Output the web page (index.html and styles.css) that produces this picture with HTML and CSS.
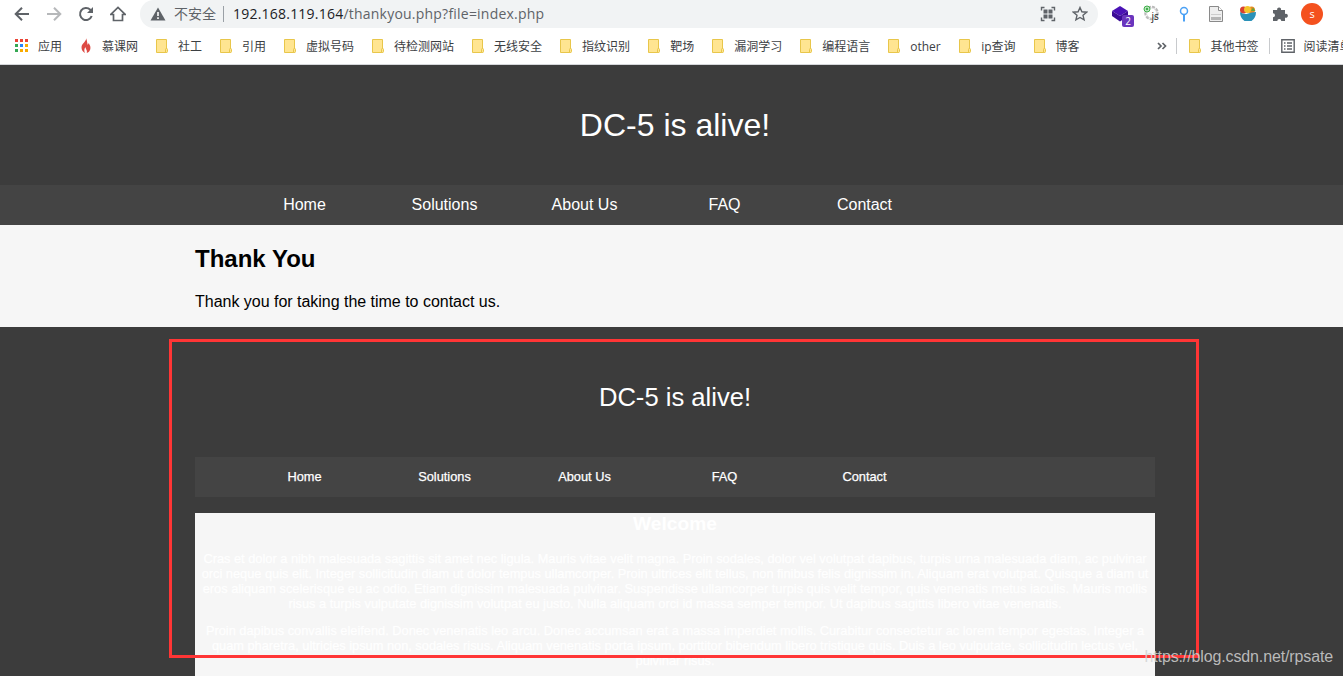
FILE: index.html
```
<!DOCTYPE html>
<html lang="zh-CN">
<head>
    <meta charset="UTF-8">
    <meta name="viewport" content="width=device-width, initial-scale=1.0">
    <title>Thank You</title>
    <link rel="stylesheet" href="styles.css">
</head>
<body>
    <!-- reusable shapes -->
    <svg class="defs" width="0" height="0">
        <symbol id="folder" viewBox="0 0 16 16">
            <path d="M2.500 1.500h10v13h-10z" fill="#ffe591" stroke="#e8c64a"/>
            <path d="M11.500 14.500v-3q0-1 1-1t1 1v2q0 1-1 1z" fill="#ffe591" stroke="#e8c64a"/>
        </symbol>
    </svg>

    <div class="browser">
        <div class="toolbar">
            <div class="nav-buttons">
                <svg width="16" height="16" viewBox="0 0 16 16"><path d="M15 8H2M8 1.700L1.700 8 8 14.300" class="line"/></svg>
                <svg width="16" height="16" viewBox="0 0 16 16" class="disabled"><path d="M1 8h13M8 1.700L14.300 8 8 14.300" class="line"/></svg>
                <svg width="16" height="16" viewBox="0 0 16 16"><path d="M13.700 10A6 6 0 1 1 12.300 3.800L14 5.500" class="line"/><path d="M15 1v6H9z" fill="#5f6368"/></svg>
                <svg width="16" height="16" viewBox="0 0 16 16"><path d="M.8 8.500h2.700v6h9v-6h2.700L8 1.500z" class="line thin"/></svg>
            </div>
            <div class="address">
                <svg width="16" height="14" viewBox="0 0 16 14"><path d="M8 .5L15.500 13.500H.5z" fill="#5f6368"/><path d="M8 5v4M8 10.200v1.800" stroke="#fff" stroke-width="1.600"/></svg>
                <span class="insecure">不安全</span>
                <span class="url"><b>192.168.119.164</b>/thankyou.php?file=index.php</span>
                <svg class="qr" width="16" height="16" viewBox="0 0 16 16"><path d="M1.500 4.500v-3h3M11.500 1.500h3v3M14.500 11.500v3h-3M4.500 14.500h-3v-3" fill="none" stroke="#5f6368" stroke-width="1.400"/><path d="M3.500 3.500h4v4h-4zM8.500 3.500h4v4h-4zM3.500 8.500h4v4h-4zM8.500 8.500h4v4h-4z" fill="#5f6368"/></svg>
                <svg width="16" height="16" viewBox="0 0 16 16"><path d="M8 1.500l1.900 4.300 4.700.4-3.600 3.100 1.100 4.600L8 11.500l-4.100 2.400L5 9.300 1.400 6.200l4.700-.4z" fill="none" stroke="#5f6368" stroke-width="1.400"/></svg>
            </div>
            <div class="extensions">
                <div class="ext">
                    <svg width="18" height="16" viewBox="0 0 18 16"><path d="M9 0l8 5-8 5-8-5z" fill="#4a12b5"/><path d="M1 5l8 5 8-5v5l-8 5.500L1 10z" fill="#3b0c96"/></svg>
                    <span class="count">2</span>
                </div>
                <div class="ext"><svg width="18" height="18" viewBox="0 0 18 18"><circle cx="8.500" cy="8" r="6" fill="none" stroke="#bbb" stroke-width="2.500" stroke-dasharray="3 1"/><circle cx="8.500" cy="8" r="5" fill="#fff" stroke="#ddd"/><circle cx="4" cy="4" r="3" fill="#bfe6c2" stroke="#3fae49"/><circle cx="4" cy="4" r="1.200" fill="#3fae49"/><text x="8.500" y="15" class="js">js</text></svg></div>
                <div class="ext"><svg width="16" height="16" viewBox="0 0 16 16"><circle cx="8" cy="5" r="3.500" fill="none" stroke="#4ba1f5" stroke-width="1.500"/><path d="M8 8.500V15.500" stroke="#4ba1f5" stroke-width="2"/></svg></div>
                <div class="ext"><svg width="16" height="18" viewBox="0 0 16 18"><path d="M1.500 1.500h9l4 4v11h-13z" fill="#eee" stroke="#8a8a8a"/><path d="M10.500 1.500v4h4" fill="#fff" stroke="#8a8a8a"/><path d="M3 12h10v3H3z" fill="#b5b5b5"/><path d="M3 9.500h10" stroke="#ccc"/></svg></div>
                <div class="ext"><svg width="18" height="18" viewBox="0 0 18 18"><circle cx="4.500" cy="5" r="3.500" fill="#d84132"/><circle cx="12.500" cy="5" r="3.500" fill="#e98a24"/><circle cx="8.500" cy="4.500" r="3.500" fill="#f5c52b"/><path d="M12 6l2-3.500L16.500 6z" fill="#64a63b"/><path d="M1 7q4 3 8 1.500T17 7q0 6-4.500 9h-7Q1 13 1 7z" fill="#2a91b8"/></svg></div>
                <div class="ext"><svg width="16" height="16" viewBox="0 0 16 16"><path d="M1 4h4.200a2 2 0 1 1 3.800 0h4v4a2 2 0 1 1 0 3.600V15H9.300a2 2 0 0 0-4 0H1v-3.700a2 2 0 0 0 0-4z" fill="#5f6368"/></svg></div>
                <div class="ext"><span class="avatar">s</span></div>
            </div>
        </div>

        <div class="bookmarks">
            <a><svg width="16" height="16" viewBox="0 0 16 16"><path d="M1 1h3v3H1zM6 1h3v3H6zM11 1h3v3h-3z" fill="#ea4335"/><path d="M1 6h3v3H1zM1 11h3v3H1z" fill="#34a853"/><path d="M6 6h3v3H6z" fill="#2684fc"/><path d="M11 6h3v3h-3zM6 11h3v3H6zM11 11h3v3h-3z" fill="#f9ab00"/></svg>应用</a>
            <a><svg width="16" height="16" viewBox="0 0 16 16"><path d="M8 0c1 3-4 5-4.500 9-.2 3 1.500 5 3.500 6-1-2-1-4 .5-6 0 2 2 3 1.300 6 3-1 4-4 3.500-6.500C12 7 11 6.500 11 5c-.5.500-1 1-1 2C9 6 9.500 3 8 0z" fill="#dd4a43"/></svg>慕课网</a>
            <a><svg width="16" height="16"><use href="#folder"/></svg>社工</a>
            <a><svg width="16" height="16"><use href="#folder"/></svg>引用</a>
            <a><svg width="16" height="16"><use href="#folder"/></svg>虚拟号码</a>
            <a><svg width="16" height="16"><use href="#folder"/></svg>待检测网站</a>
            <a><svg width="16" height="16"><use href="#folder"/></svg>无线安全</a>
            <a><svg width="16" height="16"><use href="#folder"/></svg>指纹识别</a>
            <a><svg width="16" height="16"><use href="#folder"/></svg>靶场</a>
            <a><svg width="16" height="16"><use href="#folder"/></svg>漏洞学习</a>
            <a><svg width="16" height="16"><use href="#folder"/></svg>编程语言</a>
            <a><svg width="16" height="16"><use href="#folder"/></svg><span class="latin">other</span></a>
            <a><svg width="16" height="16"><use href="#folder"/></svg>ip查询</a>
            <a><svg width="16" height="16"><use href="#folder"/></svg>博客</a>
            <div class="right">
                <svg width="10" height="8" viewBox="0 0 10 8"><path d="M1 1l3 3-3 3M5.500 1l3 3-3 3" class="chevron"/></svg>
                <a class="others"><svg width="16" height="16"><use href="#folder"/></svg>其他书签</a>
                <a class="reading"><svg width="16" height="16" viewBox="0 0 16 16"><path d="M1.800 1.800h12.400v12.400H1.800z" fill="none" stroke="#5f6368" stroke-width="1.400"/><path d="M4 5h1.500M7 5h5M4 8h1.500M7 8h5M4 11h1.500M7 11h5" stroke="#5f6368" stroke-width="1.400"/></svg>阅读清单</a>
            </div>
        </div>
    </div>

    <div class="page">
        <header class="header"><h1>DC-5 is alive!</h1></header>
        <nav class="menu">
            <ul>
                <li>Home</li>
                <li>Solutions</li>
                <li>About Us</li>
                <li>FAQ</li>
                <li>Contact</li>
            </ul>
        </nav>
        <main class="content">
            <h2>Thank You</h2>
            <p>Thank you for taking the time to contact us.</p>
        </main>
        <footer class="footer">
            <header class="header"><h1>DC-5 is alive!</h1></header>
            <nav class="menu">
                <ul>
                    <li>Home</li>
                    <li>Solutions</li>
                    <li>About Us</li>
                    <li>FAQ</li>
                    <li>Contact</li>
                </ul>
            </nav>
            <div class="welcome">
                <h2>Welcome</h2>
                <p>
                    Cras et dolor a nibh malesuada sagittis sit amet nec ligula. Mauris vitae velit magna. Proin sodales, dolor vel volutpat dapibus, turpis urna malesuada diam, ac pulvinar<br>
                    orci neque quis elit. Integer sollicitudin diam ut dolor tempus ullamcorper. Proin ultrices elit tellus, non finibus felis dignissim in. Aliquam erat volutpat. Quisque a diam ut<br>
                    eros aliquam scelerisque eu ac odio. Etiam dignissim malesuada pulvinar. Suspendisse ullamcorper turpis quis velit tempor, quis venenatis metus iaculis. Mauris mollis<br>
                    risus a turpis vulputate dignissim volutpat eu justo. Nulla aliquam orci id massa semper tempor. Ut dapibus sagittis libero vitae venenatis.
                </p>
                <p>
                    Proin dapibus convallis eleifend. Donec venenatis leo arcu. Donec accumsan erat a massa imperdiet mollis. Curabitur consectetur ac lorem tempor egestas. Integer a<br>
                    quam pharetra, ultricies ipsum non, sodales risus. Aliquam venenatis porta ipsum, porttitor bibendum libero tristique quis. Duis a leo vulputate, sollicitudin lectus vel,<br>
                    pulvinar risus.
                </p>
            </div>
        </footer>
    </div>

    <div class="marker"></div>
    <div class="watermark">https://blog.csdn.net/rpsate</div>
</body>
</html>
```
FILE: styles.css
```
* {
    box-sizing: border-box;
}
body {
    margin: 0;
    height: 676px;
    overflow: hidden;
    position: relative;
    background-color: #3c3c3c;
    font-family: "Liberation Sans", Arial, sans-serif;
}
svg {
    display: block;
    flex: none;
}
.defs {
    position: absolute;
}

/* browser bars */
.browser {
    height: 65px;
    background-color: #fff;
    border-bottom: 1px solid #d5d7da;
    font-family: "Open Sans", "Noto Sans CJK SC", sans-serif;
}
.toolbar {
    display: flex;
    height: 28px;
}
.nav-buttons {
    display: flex;
    align-items: center;
    gap: 16px;
    width: 140px;
    padding-left: 14px;
}
.line {
    fill: none;
    stroke: #5f6368;
    stroke-width: 2;
}
.thin {
    stroke-width: 1.7;
}
.disabled {
    opacity: 0.45;
}
.address {
    display: flex;
    align-items: center;
    width: 958px;
    padding: 0 10px;
    background-color: #f1f3f4;
    border-radius: 0 14px 14px 0;
    border-top-left-radius: 14px;
    border-bottom-left-radius: 14px;
    color: #5f6368;
    font-size: 14px;
}
.insecure {
    margin-left: 8px;
    padding-right: 7px;
    border-right: 1px solid #9aa0a6;
    line-height: 16px;
}
.url {
    margin-left: 9px;
    letter-spacing: 0.22px;
    line-height: 18px;
    padding-bottom: 1px;
}
.url b {
    color: #202124;
    font-weight: normal;
}
.qr {
    margin-left: auto;
    margin-right: 16px;
}
.extensions {
    display: flex;
    align-items: center;
    padding-left: 6px;
}
.ext {
    position: relative;
    display: flex;
    justify-content: center;
    width: 32px;
}
.count {
    position: absolute;
    left: 18px;
    top: 9px;
    width: 12px;
    height: 12px;
    border-radius: 2px;
    background-color: #6a35bd;
    color: #fff;
    font-size: 10px;
    line-height: 12px;
    text-align: center;
}
.js {
    font-size: 10px;
    fill: #222;
}
.avatar {
    width: 22px;
    height: 22px;
    border-radius: 50%;
    background-color: #f4511e;
    color: #fff;
    font-size: 11px;
    line-height: 21px;
    text-align: center;
}
.bookmarks {
    display: flex;
    align-items: center;
    gap: 16px;
    height: 36px;
    padding-left: 14px;
    color: #3c4043;
    font-size: 12px;
    white-space: nowrap;
}
.bookmarks a {
    display: flex;
    align-items: center;
    gap: 8px;
    flex: none;
}
.latin {
    width: 31px;
}
.right {
    display: flex;
    align-items: center;
    flex: none;
    height: 16px;
    margin-left: 61px;
}
.chevron {
    fill: none;
    stroke: #5f6368;
    stroke-width: 1.7;
}
.bookmarks .others {
    margin-left: 9px;
    padding: 0 10px;
    height: 16px;
    border-left: 1px solid #c8cacd;
    border-right: 1px solid #c8cacd;
}
.reading {
    padding-left: 10px;
}

/* site */
.header {
    display: flex;
    align-items: center;
    width: 960px;
    height: 120px;
    margin-left: 195px;
    color: #fff;
}
.header h1 {
    flex: 1;
    margin: 0;
    font-size: 2em;
    font-weight: normal;
    text-align: center;
}
.menu {
    height: 40px;
    padding-left: 195px;
    background-color: #444;
    color: #fff;
}
.menu ul {
    display: flex;
    margin: 0;
    padding: 0 0 0 39.5px;
    list-style: none;
}
.menu li {
    width: 140px;
    line-height: 39px;
    text-align: center;
}
.content {
    height: 102px;
    padding: 20px 0 0 195px;
    background-color: #f6f6f6;
    color: #000;
}
.content h2 {
    margin: 0 0 21px;
    font-size: 24px;
    line-height: 27px;
}
.content p {
    margin: 0;
    line-height: 18px;
    letter-spacing: -0.02px;
}
.footer {
    width: 1155px;
    padding: 10px 0 0 195px;
    color: #fff;
    font-size: 12.8px;
    text-align: center;
}
.footer .header {
    margin-left: 0;
}
.footer .menu {
    padding-left: 0;
}
.footer .menu li,
.welcome p {
    -webkit-text-stroke: 0.25px #fff;
}
.welcome {
    height: 163px;
    margin-top: 16px;
    background-color: #f6f6f6;
    overflow: hidden;
}
.welcome h2 {
    margin: 0 0 16px;
    font-size: 19.2px;
    line-height: 22px;
}
.welcome p {
    margin: 0 0 12px;
    line-height: 15px;
    white-space: nowrap;
}

/* overlays */
.marker {
    position: absolute;
    left: 169px;
    top: 339px;
    width: 1030px;
    height: 319px;
    border: 3px solid #ff3535;
}
.watermark {
    position: absolute;
    right: 10px;
    bottom: 9px;
    color: rgba(210, 210, 210, 0.85);
    font-size: 16px;
    letter-spacing: -0.13px;
    line-height: 20px;
}
```
